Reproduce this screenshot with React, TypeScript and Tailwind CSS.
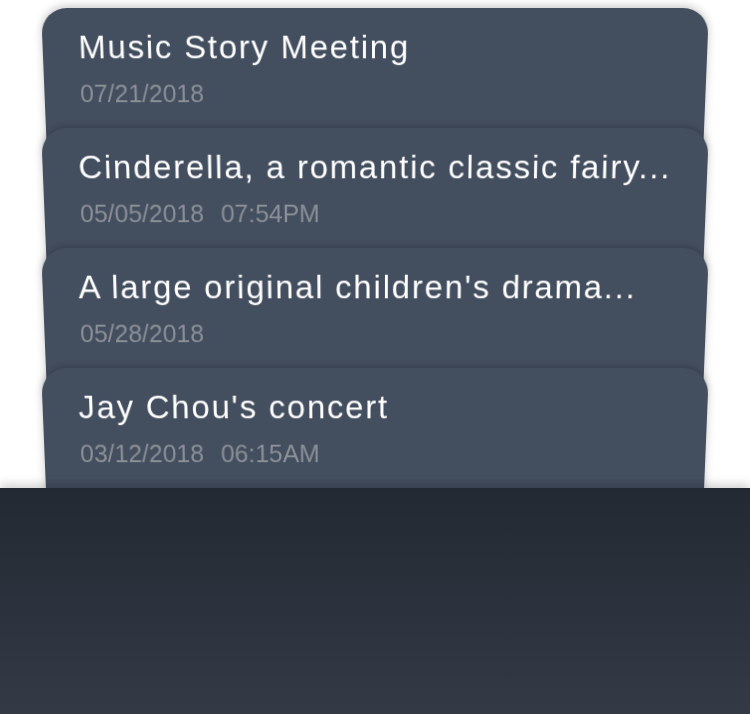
import React from "react";

type Item = { title: string; date: string; time?: string };

const items: Item[] = [
  { title: "Music Story Meeting", date: "07/21/2018" },
  { title: "Cinderella, a romantic classic fairy...", date: "05/05/2018", time: "07:54PM" },
  { title: "A large original children's drama...", date: "05/28/2018" },
  { title: "Jay Chou's concert", date: "03/12/2018", time: "06:15AM" },
];

const Card: React.FC<{ item: Item; first: boolean }> = ({ item, first }) => (
  <div
    className={`relative shrink-0 h-[160px] w-[668px] mx-auto rounded-t-[26px] bg-[#434e5f] origin-top [transform:perspective(1000px)_rotateX(-7deg)] shadow-[0_-2px_8px_rgba(0,0,0,0.22)] pl-[36px] pr-[20px] pt-[20px] ${
      first ? "" : "-mt-[40px]"
    }`}
  >
    <div className="text-[33px] leading-[40px] tracking-[1.8px] text-white whitespace-nowrap">
      {item.title}
    </div>
    <div className="mt-[11px] flex gap-[17px] text-[25px] leading-[32px] text-[#8b9097]">
      <span>{item.date}</span>
      {item.time && <span>{item.time}</span>}
    </div>
  </div>
);

export default function App() {
  return (
    <div className="w-[750px] h-[714px] bg-white flex flex-col overflow-hidden font-['Liberation_Sans',Arial,sans-serif]">
      <div className="h-[488px] shrink-0 pt-[8px] flex flex-col overflow-hidden">
        {items.map((item, i) => (
          <Card key={i} item={item} first={i === 0} />
        ))}
      </div>
      <div className="relative z-10 flex-1 bg-gradient-to-b from-[#232932] to-[#333a46] shadow-[0_-3px_10px_rgba(0,0,0,0.2)]" />
    </div>
  );
}
